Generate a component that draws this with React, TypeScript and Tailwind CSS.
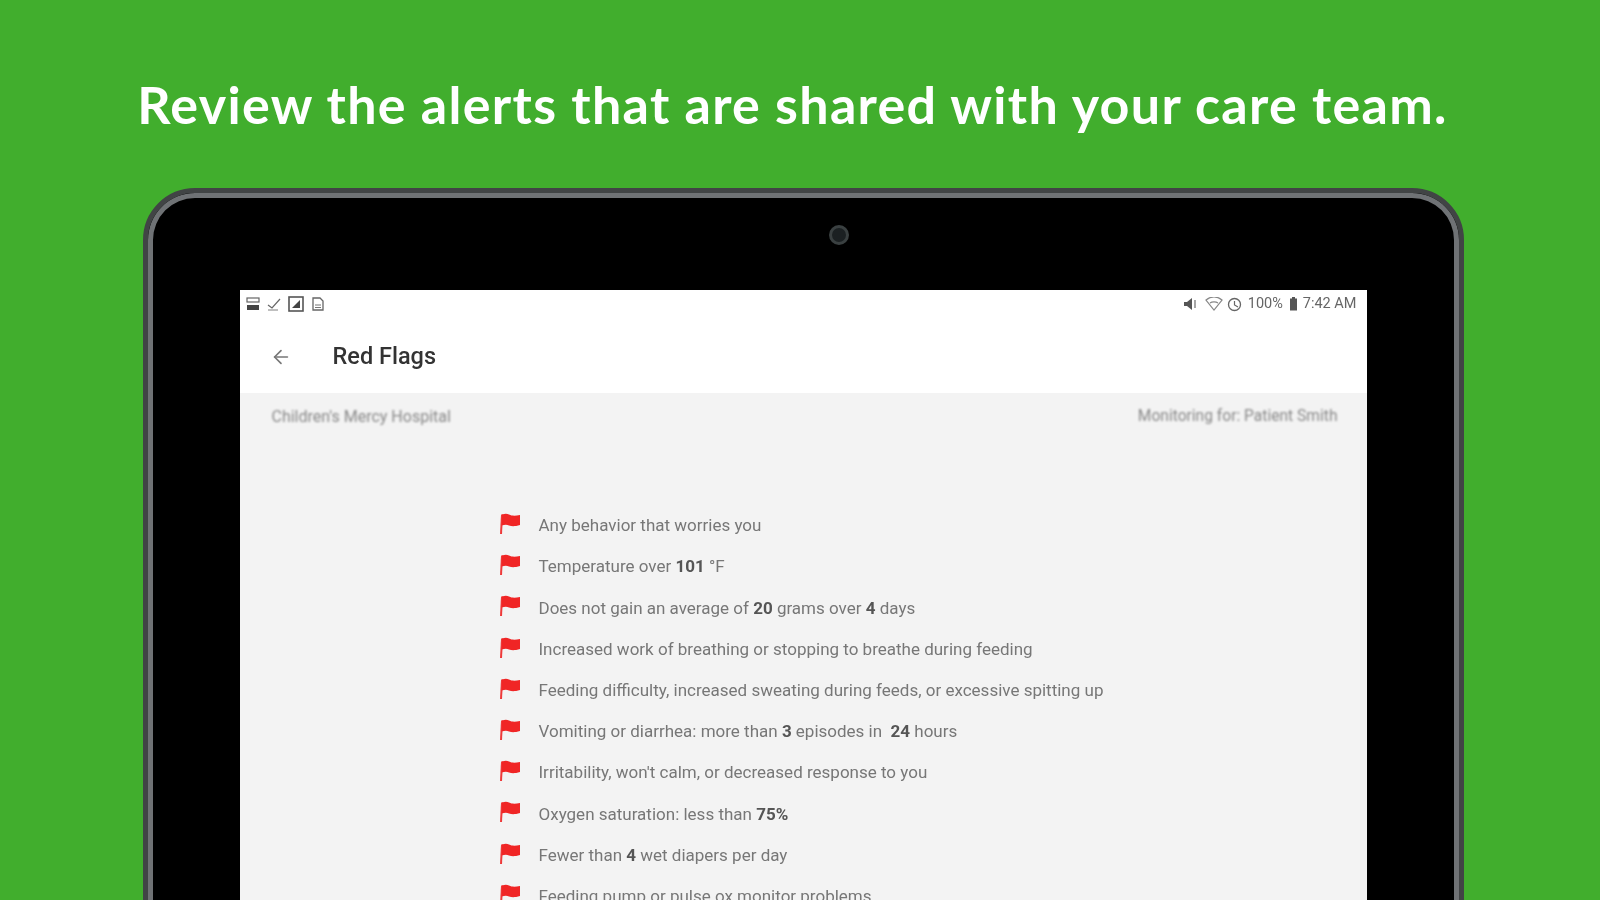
import { ArrowLeft } from "lucide-react";

type Part = { t: string; b?: boolean };

const rows: Part[][] = [
  [{ t: "Any behavior that worries you" }],
  [{ t: "Temperature over " }, { t: "101", b: true }, { t: " °F" }],
  [{ t: "Does not gain an average of " }, { t: "20", b: true }, { t: " grams over " }, { t: "4", b: true }, { t: " days" }],
  [{ t: "Increased work of breathing or stopping to breathe during feeding" }],
  [{ t: "Feeding difficulty, increased sweating during feeds, or excessive spitting up" }],
  [{ t: "Vomiting or diarrhea: more than " }, { t: "3", b: true }, { t: " episodes in  " }, { t: "24", b: true }, { t: " hours" }],
  [{ t: "Irritability, won't calm, or decreased response to you" }],
  [{ t: "Oxygen saturation: less than " }, { t: "75%", b: true }],
  [{ t: "Fewer than " }, { t: "4", b: true }, { t: " wet diapers per day" }],
  [{ t: "Feeding pump or pulse ox monitor problems" }],
];

function Flag() {
  return (
    <svg width="22" height="22" viewBox="0 0 22 22" className="shrink-0 -translate-y-[2px]">
      <path d="M3 1.5 L2 21" stroke="#ee3a3a" strokeWidth="2" fill="none" />
      <path d="M3 1.5 C6 0.5 8 0.5 10 1.5 C13 3 16 3 21 2 L21 12 C16 13.5 13 13.5 10 12.5 C8 11.5 6 11.5 2.6 12.5 Z" fill="#f02525" />
    </svg>
  );
}

function StatusLeft() {
  return (
    <div className="flex items-center gap-[7px] text-[#555]">
      <svg width="14" height="14" viewBox="0 0 14 14">
        <rect x="1" y="1" width="12" height="4" fill="none" stroke="#666" strokeWidth="1.2" />
        <rect x="1" y="8" width="12" height="5" fill="#444" />
      </svg>
      <svg width="14" height="14" viewBox="0 0 14 14">
        <path d="M1 8 L5 11 L13 2" fill="none" stroke="#666" strokeWidth="1.2" />
        <path d="M1 13 H11" stroke="#aaa" strokeWidth="1.5" />
      </svg>
      <svg width="16" height="16" viewBox="0 0 16 16">
        <rect x="1" y="1" width="14" height="14" fill="none" stroke="#555" strokeWidth="1.6" />
        <path d="M4 12 L12 4 V12 Z" fill="#444" />
      </svg>
      <svg width="13" height="14" viewBox="0 0 13 14">
        <path d="M2 1 H9 L12 4 V13 H2 Z" fill="none" stroke="#666" strokeWidth="1.3" />
        <path d="M4 8 H10 M4 10.5 H10" stroke="#777" strokeWidth="1.2" />
      </svg>
    </div>
  );
}

function StatusRight() {
  return (
    <div className="flex items-center gap-[4px] text-[14.5px] text-[#666]">
      <svg width="16" height="14" viewBox="0 0 16 14">
        <path d="M1 5 H4 L9 1 V13 L4 9 H1 Z" fill="#555" />
        <path d="M12 3 V11" stroke="#777" strokeWidth="1.3" />
      </svg>
      <svg width="18" height="14" viewBox="0 0 18 14" className="ml-[2px]">
        <path d="M1 3 C6 -1 12 -1 17 3 L9 13 Z" fill="none" stroke="#888" strokeWidth="1.2" />
        <path d="M5 6 C7 4.5 11 4.5 13 6" stroke="#888" strokeWidth="1.2" fill="none" />
      </svg>
      <svg width="15" height="15" viewBox="0 0 15 15">
        <circle cx="7.5" cy="7.5" r="6" fill="none" stroke="#666" strokeWidth="1.3" />
        <path d="M7.5 4 V8 L11 10" fill="none" stroke="#666" strokeWidth="1.2" />
      </svg>
      <span className="ml-[2px]">100%</span>
      <svg width="9" height="14" viewBox="0 0 9 14" className="ml-[2px]">
        <rect x="1" y="1.5" width="7" height="12" fill="#555" />
        <rect x="3" y="0" width="3" height="2" fill="#555" />
      </svg>
      <span className="ml-[1px]">7:42 AM</span>
    </div>
  );
}

export default function App() {
  return (
    <div className="h-[900px] w-[1600px] overflow-hidden bg-[#41ae2d] flex flex-col items-center font-['Roboto',sans-serif]">
      <h1 className="mt-[70px] mr-[15px] h-[68px] flex items-center text-white text-[52px] font-bold tracking-[1.3px] whitespace-nowrap blur-[0.7px] font-['Lato','Noto_Sans',sans-serif]">
        Review the alerts that are shared with your care team.
      </h1>

      {/* tablet */}
      <div className="relative mt-[50px] ml-[6px] w-[1321px] h-[760px] shrink-0 rounded-t-[52px] bg-black border-[5px] border-[#414445] shadow-[inset_0_0_0_5px_#6f7275] pt-[97px] pl-[92px] blur-[0.4px]">
        <div className="absolute left-[681px] top-[32px] w-[20px] h-[20px] rounded-full border-[3px] border-[#3a4041] bg-[#1b2022]" />

        <div className="h-full w-[1127px] bg-white flex flex-col">
          <div className="h-[28px] flex items-center justify-between pl-[6px] pr-[10px] blur-[0.5px]">
            <StatusLeft />
            <StatusRight />
          </div>
          <div className="h-[75px] flex items-center pl-[30px] pt-[3px] blur-[0.5px]">
            <ArrowLeft size={22} strokeWidth={1.8} className="text-[#777]" />
            <span className="ml-[41px] text-[23.5px] font-medium text-[#333]">Red Flags</span>
          </div>

          <div className="flex-1 bg-[#f3f3f3]">
            <div className="flex justify-between pl-[32px] pr-[29px] pt-[12px] text-[16px] text-[#888] blur-[0.8px]">
              <span>Children's Mercy Hospital</span>
              <span className="text-[15.6px]">Monitoring for: Patient Smith</span>
            </div>

            <div className="mt-[86px] ml-[259px] flex flex-col gap-[19.2px]">
              {rows.map((row, i) => (
                <div key={i} className="h-[22px] flex items-center gap-[18px] text-[17px] text-[#777] whitespace-pre blur-[0.7px]">
                  <Flag />
                  <span>
                    {row.map((p, j) => (
                      <span key={j} className={p.b ? "font-bold text-[#555]" : ""}>
                        {p.t}
                      </span>
                    ))}
                  </span>
                </div>
              ))}
            </div>
          </div>
        </div>
      </div>
    </div>
  );
}
